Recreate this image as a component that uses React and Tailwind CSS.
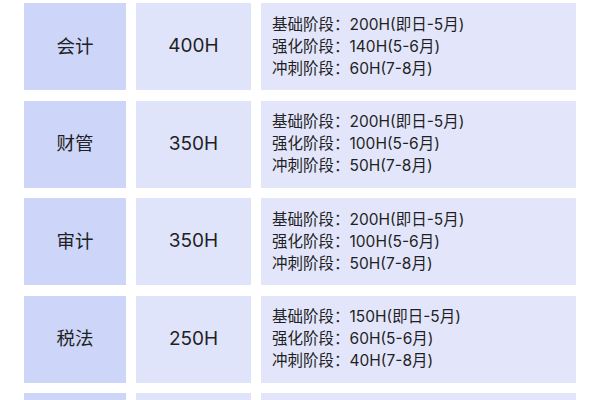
import React from 'react';

const rows = [
  { subject: '会计', hours: '400H', stages: ['200H(即日-5月)', '140H(5-6月)', '60H(7-8月)'] },
  { subject: '财管', hours: '350H', stages: ['200H(即日-5月)', '100H(5-6月)', '50H(7-8月)'] },
  { subject: '审计', hours: '350H', stages: ['200H(即日-5月)', '100H(5-6月)', '50H(7-8月)'] },
  { subject: '税法', hours: '250H', stages: ['150H(即日-5月)', '60H(5-6月)', '40H(7-8月)'] },
];

const labels = ['基础阶段', '强化阶段', '冲刺阶段'];

function Row({ row }) {
  return (
    <div className="flex gap-[10px] h-[87px] shrink-0">
      {/* subject */}
      <div className="w-[102px] bg-[#cdd5f9] flex items-center justify-center text-[18.5px]">
        {row?.subject}
      </div>
      {/* total hours */}
      <div className="w-[115px] bg-[#e0e4fb] flex items-center justify-center text-[19px]">
        {row?.hours}
      </div>
      {/* stages */}
      <div className="flex-1 bg-[#e3e6fb] flex flex-col justify-center pl-[11px] text-[15.5px] leading-[22px]">
        {row && row.stages.map((s, i) => (
          <div key={i}>
            {labels[i]}：{s}
          </div>
        ))}
      </div>
    </div>
  );
}

export default function App() {
  return (
    <div
      className="w-[600px] h-[400px] overflow-hidden bg-white text-[#1f1f24]"
      style={{ fontFamily: 'Inter, "Noto Sans CJK SC", sans-serif' }}
    >
      <div className="flex flex-col gap-[10.5px] px-[24px] pt-[3px]">
        {rows.map((row) => (
          <Row key={row.subject} row={row} />
        ))}
        {/* next row, cut off by the bottom edge */}
        <Row row={null} />
      </div>
    </div>
  );
}
